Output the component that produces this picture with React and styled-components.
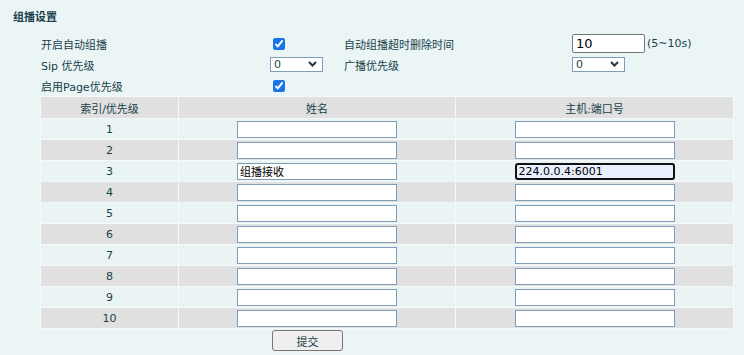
import React from "react";
import styled, { createGlobalStyle } from "styled-components";

const GlobalStyle = createGlobalStyle`
  html, body {
    margin: 0;
    padding: 0;
    background: #ebf5f5;
  }
  body {
    font-family: "DejaVu Sans", "Noto Sans CJK SC", sans-serif;
    font-size: 11px;
    color: #173f4a;
  }
`;

const rows = [
  { name: "", host: "" },
  { name: "", host: "" },
  { name: "组播接收", host: "224.0.0.4:6001", focus: true },
  { name: "", host: "" },
  { name: "", host: "" },
  { name: "", host: "" },
  { name: "", host: "" },
  { name: "", host: "" },
  { name: "", host: "" },
  { name: "", host: "" },
];

const Chevron = () => (
  <svg width="9" height="6" viewBox="0 0 9 6">
    <path d="M1 1 L4.5 4.5 L8 1" fill="none" stroke="#1b3a44" strokeWidth="2" />
  </svg>
);

const App = () => {
  return (
    <Page>
      <GlobalStyle />
      <Title>组播设置</Title>
      <Settings>
        <Label>开启自动组播</Label>
        <Cell>
          <Check type="checkbox" defaultChecked />
        </Cell>
        <Label>自动组播超时删除时间</Label>
        <Cell>
          <TimeInput defaultValue="10" />
          <Hint>(5~10s)</Hint>
        </Cell>

        <Label>Sip 优先级</Label>
        <Cell>
          <SelectWrap>
            <Select defaultValue="0">
              <option>0</option>
            </Select>
            <Arrow>
              <Chevron />
            </Arrow>
          </SelectWrap>
        </Cell>
        <Label>广播优先级</Label>
        <Cell>
          <SelectWrap>
            <Select defaultValue="0">
              <option>0</option>
            </Select>
            <Arrow>
              <Chevron />
            </Arrow>
          </SelectWrap>
        </Cell>

        <Label>启用Page优先级</Label>
        <Cell>
          <Check type="checkbox" defaultChecked />
        </Cell>
      </Settings>

      <Table>
        <colgroup>
          <col style={{ width: 137 }} />
          <col style={{ width: 276 }} />
          <col style={{ width: 277 }} />
        </colgroup>
        <thead>
          <tr>
            <Th>索引/优先级</Th>
            <Th>姓名</Th>
            <Th>主机:端口号</Th>
          </tr>
        </thead>
        <tbody>
          {rows.map((r, i) => (
            <tr key={i}>
              <Td $even={i % 2 === 1}>{i + 1}</Td>
              <Td $even={i % 2 === 1}>
                <FieldInput defaultValue={r.name} />
              </Td>
              <Td $even={i % 2 === 1}>
                <FieldInput defaultValue={r.host} $focus={r.focus} />
              </Td>
            </tr>
          ))}
        </tbody>
      </Table>

      <Actions>
        <Submit>提交</Submit>
      </Actions>
    </Page>
  );
};

const Page = styled.div`
  width: 744px;
  height: 355px;
  overflow: hidden;
`;

const Title = styled.div`
  padding: 11px 0 0 13px;
  height: 14px;
  line-height: 14px;
  font-weight: bold;
`;

const Settings = styled.div`
  display: grid;
  grid-template-columns: 229px 74px 228px auto;
  grid-auto-rows: 21px;
  margin-top: 8px;
  padding-left: 41px;
`;

const Label = styled.div`
  display: flex;
  align-items: center;
  white-space: nowrap;
`;

const Cell = styled.div`
  display: flex;
  align-items: center;
`;

const Check = styled.input`
  width: 12px;
  height: 12px;
  margin: 0 0 0 3px;
  accent-color: #1a73e8;
`;

const TimeInput = styled.input`
  box-sizing: border-box;
  width: 73px;
  height: 19px;
  border: 1px solid #767676;
  border-radius: 2px;
  background: #fff;
  padding: 0 3px;
  font-family: "DejaVu Sans", sans-serif;
  font-size: 13px;
  color: #000;
`;

const Hint = styled.span`
  margin-left: 2px;
`;

const SelectWrap = styled.div`
  position: relative;
  width: 53px;
  height: 15px;
`;

const Select = styled.select`
  appearance: none;
  box-sizing: border-box;
  width: 100%;
  height: 100%;
  border: 1px solid #7f9db9;
  border-radius: 0;
  background: #fff;
  padding: 0 0 0 3px;
  font-family: "DejaVu Sans", sans-serif;
  font-size: 11px;
  line-height: 13px;
  color: #173f4a;
`;

const Arrow = styled.span`
  position: absolute;
  right: 6px;
  top: 4px;
  display: flex;
  pointer-events: none;
`;

const Table = styled.table`
  margin: 0 0 0 40px;
  width: 693px;
  table-layout: fixed;
  border-collapse: separate;
  border-spacing: 1px;
  background: #f4f9f9;
`;

const Th = styled.th`
  height: 21px;
  padding: 0;
  background: #e0e0e0;
  font-weight: normal;
  text-align: center;
  color: #173f4a;
`;

const Td = styled.td`
  height: 20px;
  padding: 0;
  text-align: center;
  background: ${(p) => (p.$even ? "#e0e0e0" : "#eaf4f4")};
  color: #173f4a;
`;

const FieldInput = styled.input`
  display: block;
  box-sizing: border-box;
  margin: 0 auto;
  width: 160px;
  height: 17px;
  padding: 0 2px;
  border: ${(p) => (p.$focus ? "2px solid #111" : "1px solid #7f9db9")};
  border-radius: ${(p) => (p.$focus ? "3px" : "0")};
  background: ${(p) => (p.$focus ? "#e8f0fe" : "#fff")};
  font-family: "DejaVu Sans", "Noto Sans CJK SC", sans-serif;
  font-size: 11px;
  color: #000;
  outline: none;
`;

const Actions = styled.div`
  padding: 1px 0 0 272px;
`;

const Submit = styled.button`
  width: 71px;
  height: 21px;
  border: 1px solid #767676;
  border-radius: 3px;
  background: #efefef;
  font-family: "Noto Sans CJK SC", sans-serif;
  font-size: 11px;
  color: #173f4a;
  padding: 0;
`;

export default App;
